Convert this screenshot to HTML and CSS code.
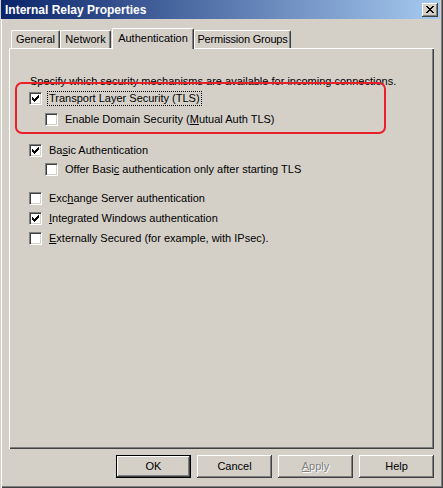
FILE: index.html
```html
<!DOCTYPE html>
<html>
<head>
<meta charset="utf-8">
<link rel="stylesheet" href="styles.css">
</head>
<body>
<div class="window">
  <div class="titlebar">
    <span class="title">Internal Relay Properties</span>
    <span class="close">
      <svg width="8" height="7" viewBox="0 0 8 7" shape-rendering="crispEdges"><path d="M0 0h2v1h-2zM6 0h2v1h-2zM1 1h2v1h-2zM5 1h2v1h-2zM2 2h4v1h-4zM3 3h2v1h-2zM2 4h4v1h-4zM1 5h2v1h-2zM5 5h2v1h-2zM0 6h2v1h-2zM6 6h2v1h-2z" fill="#000"/></svg>
    </span>
  </div>
  <div class="dialog">
    <div class="tabs">
      <div class="tab tab-general">General</div>
      <div class="tab tab-network">Network</div>
      <div class="tab tab-auth active">Authentication</div>
      <div class="tab tab-perm">Permission Groups</div>
    </div>
    <div class="panel">
      <p class="intro">Specify which security mechanisms are available for incoming connections.</p>
      <div class="opt row-tls">
        <span class="cb"><svg width="7" height="7" viewBox="0 0 7 7" shape-rendering="crispEdges"><path d="M6 0h1v1h-1zM5 1h2v1h-2zM0 2h1v1h-1zM4 2h3v1h-3zM0 3h2v1h-2zM3 3h3v1h-3zM0 4h5v1h-5zM1 5h3v1h-3zM2 6h1v1h-1z" fill="#000"/></svg></span>
        <span class="lbl focus">Transport Layer Security (TLS)</span>
      </div>
      <div class="opt sub row-enable">
        <span class="cb"></span>
        <span class="lbl">Enable Domain Security (<u>M</u>utual Auth TLS)</span>
      </div>
      <div class="opt row-basic">
        <span class="cb"><svg width="7" height="7" viewBox="0 0 7 7" shape-rendering="crispEdges"><path d="M6 0h1v1h-1zM5 1h2v1h-2zM0 2h1v1h-1zM4 2h3v1h-3zM0 3h2v1h-2zM3 3h3v1h-3zM0 4h5v1h-5zM1 5h3v1h-3zM2 6h1v1h-1z" fill="#000"/></svg></span>
        <span class="lbl">Ba<u>s</u>ic Authentication</span>
      </div>
      <div class="opt sub row-offer">
        <span class="cb"></span>
        <span class="lbl">Offer Basi<u>c</u> authentication only after starting TLS</span>
      </div>
      <div class="opt row-exchange">
        <span class="cb"></span>
        <span class="lbl">Exc<u>h</u>ange Server authentication</span>
      </div>
      <div class="opt row-integrated">
        <span class="cb"><svg width="7" height="7" viewBox="0 0 7 7" shape-rendering="crispEdges"><path d="M6 0h1v1h-1zM5 1h2v1h-2zM0 2h1v1h-1zM4 2h3v1h-3zM0 3h2v1h-2zM3 3h3v1h-3zM0 4h5v1h-5zM1 5h3v1h-3zM2 6h1v1h-1z" fill="#000"/></svg></span>
        <span class="lbl"><u>I</u>ntegrated Windows authentication</span>
      </div>
      <div class="opt row-external">
        <span class="cb"></span>
        <span class="lbl"><u>E</u>xternally Secured (for example, with IPsec).</span>
      </div>
      <div class="highlight"></div>
    </div>
    <div class="buttons">
      <div class="btn default">OK</div>
      <div class="btn">Cancel</div>
      <div class="btn disabled"><u>A</u>pply</div>
      <div class="btn">Help</div>
    </div>
  </div>
</div>
</body>
</html>
```

FILE: styles.css
```css
* { box-sizing: border-box; }
html, body { margin: 0; padding: 0; }
body {
  background: #d4d0c8;
  font-family: "Liberation Sans", Arial, sans-serif;
  font-size: 11px;
  color: #000;
}
.window {
  width: 443px;
  height: 488px;
  padding: 0 2px 2px 2px;
  background: #d4d0c8;
  box-shadow: inset 1px 0 #d4d0c8, inset 2px 0 #fff, inset -1px -1px #404040, inset -2px -2px #808080;
}
.titlebar {
  height: 19px;
  margin: 0 1px 0 -1px;
  background: linear-gradient(to right, #0a246a, #a6caf0);
  display: flex;
  align-items: center;
  justify-content: space-between;
  padding: 0 2px 0 4px;
}
.title {
  color: #fff;
  font-weight: bold;
  font-size: 12px;
  line-height: 14px;
}
.close {
  width: 16px;
  height: 14px;
  background: #d4d0c8;
  box-shadow: inset -1px -1px #404040, inset 1px 1px #fff, inset -2px -2px #808080;
  display: flex;
  align-items: center;
  justify-content: center;
  padding-bottom: 1px;
}
.close svg { display: block; }
.dialog {
  padding: 9px 7px 0 7px;
}
.tabs {
  display: flex;
  align-items: flex-end;
  height: 20px;
  padding-left: 2px;
}
.tab {
  height: 18px;
  border-top: 1px solid #fff;
  border-left: 1px solid #fff;
  border-right: 1px solid #404040;
  border-radius: 2px 2px 0 0;
  box-shadow: inset -1px 0 #808080;
  display: flex;
  align-items: center;
  justify-content: center;
  line-height: 13px;
  white-space: nowrap;
  background: #d4d0c8;
}
.tab-general { width: 49px; }
.tab-network { width: 51px; }
.tab-auth { width: 82px; margin-left: 1px; }
.tab-perm { width: 97px; letter-spacing: -0.2px; }
.tab.active {
  height: 21px;
  margin-bottom: -1px;
  position: relative;
  z-index: 1;
  padding-bottom: 2px;
}
.panel {
  position: relative;
  height: 401px;
  padding: 27px 0 0 20px;
  box-shadow: inset 1px 1px #fff, inset -1px -1px #404040, inset -2px -2px #808080;
}
.intro {
  margin: 0 0 0 1px;
  line-height: 13px;
  white-space: nowrap;
}
.opt {
  display: flex;
  align-items: center;
  height: 13px;
  gap: 7px;
  line-height: 13px;
  white-space: nowrap;
}
.opt.sub { margin-left: 16px; }
.row-tls { margin-top: 4px; }
.row-enable { margin-top: 8px; }
.row-basic { margin-top: 18px; }
.row-offer { margin-top: 6px; }
.row-exchange { margin-top: 16px; }
.row-integrated { margin-top: 7px; }
.row-external { margin-top: 7px; }
.cb {
  width: 13px;
  height: 13px;
  flex: none;
  background: #fff;
  border: 1px solid;
  border-color: #808080 #fff #fff #808080;
  box-shadow: inset 1px 1px #404040, inset -1px -1px #d4d0c8;
  display: flex;
  align-items: center;
  justify-content: center;
}
.cb svg { display: block; }
.lbl u { text-decoration: underline; }
.focus {
  border: 1px dotted #000;
  padding: 0 1px;
  margin-left: -2px;
  line-height: 13px;
}
.highlight {
  position: absolute;
  left: 6px;
  top: 34px;
  width: 371px;
  height: 52px;
  border: 2px solid #e8202a;
  border-radius: 7px;
}
.buttons {
  display: flex;
  justify-content: flex-end;
  gap: 6px;
  margin-top: 6px;
}
.btn {
  width: 75px;
  height: 23px;
  display: flex;
  align-items: center;
  justify-content: center;
  line-height: 13px;
  box-shadow: inset -1px -1px #404040, inset 1px 1px #fff, inset -2px -2px #808080;
}
.btn.default {
  border: 1px solid #000;
}
.btn.disabled {
  color: #808080;
  text-shadow: 1px 1px 0 #fff;
}
```
